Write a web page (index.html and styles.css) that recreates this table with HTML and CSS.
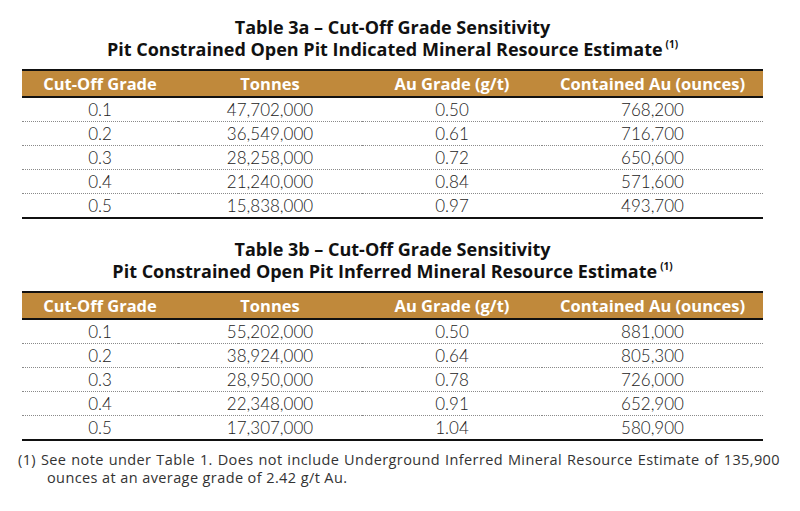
FILE: index.html
```html
<!DOCTYPE html>
<html>
<head>
<meta charset="utf-8">
<link rel="stylesheet" href="styles.css">
</head>
<body>
<div class="page">
  <section class="block">
    <h2 class="title">Table 3a – Cut-Off Grade Sensitivity<br>Pit Constrained Open Pit Indicated Mineral Resource Estimate<sup>(1)</sup></h2>
    <table class="data">
      <colgroup><col class="c1"><col class="c2"><col class="c3"><col class="c4"></colgroup>
      <thead><tr><th>Cut-Off Grade</th><th>Tonnes</th><th>Au Grade (g/t)</th><th>Contained Au (ounces)</th></tr></thead>
      <tbody>
        <tr><td>0.1</td><td>47,702,000</td><td>0.50</td><td>768,200</td></tr>
        <tr><td>0.2</td><td>36,549,000</td><td>0.61</td><td>716,700</td></tr>
        <tr><td>0.3</td><td>28,258,000</td><td>0.72</td><td>650,600</td></tr>
        <tr><td>0.4</td><td>21,240,000</td><td>0.84</td><td>571,600</td></tr>
        <tr><td>0.5</td><td>15,838,000</td><td>0.97</td><td>493,700</td></tr>
      </tbody>
    </table>
  </section>
  <section class="block second">
    <h2 class="title">Table 3b – Cut-Off Grade Sensitivity<br>Pit Constrained Open Pit Inferred Mineral Resource Estimate<sup>(1)</sup></h2>
    <table class="data">
      <colgroup><col class="c1"><col class="c2"><col class="c3"><col class="c4"></colgroup>
      <thead><tr><th>Cut-Off Grade</th><th>Tonnes</th><th>Au Grade (g/t)</th><th>Contained Au (ounces)</th></tr></thead>
      <tbody>
        <tr><td>0.1</td><td>55,202,000</td><td>0.50</td><td>881,000</td></tr>
        <tr><td>0.2</td><td>38,924,000</td><td>0.64</td><td>805,300</td></tr>
        <tr><td>0.3</td><td>28,950,000</td><td>0.78</td><td>726,000</td></tr>
        <tr><td>0.4</td><td>22,348,000</td><td>0.91</td><td>652,900</td></tr>
        <tr><td>0.5</td><td>17,307,000</td><td>1.04</td><td>580,900</td></tr>
      </tbody>
    </table>
  </section>
  <p class="note">(1) See note under Table 1. Does not include Underground Inferred Mineral Resource Estimate of 135,900 ounces at an average grade of 2.42 g/t Au.</p>
</div>
</body>
</html>
```

FILE: styles.css
```css
* { box-sizing: border-box; }
html, body { margin: 0; padding: 0; background: #fff; }
body { font-family: Lato, "Open Sans", sans-serif; color: #111; }
.page { width: 800px; padding-top: 16px; }
.block { width: 741px; margin-left: 22px; }
.block.second { margin-top: 19px; }
.title {
  margin: 0 0 9px 0;
  text-align: center;
  font-family: "Open Sans", Lato, sans-serif;
  font-size: 18px;
  line-height: 22px;
  font-weight: 700;
  color: #111;
}
.title sup {
  font-size: 10px;
  font-weight: 700;
  vertical-align: 8px;
  line-height: 0;
  margin-left: 3px;
}
.data { width: 741px; border-collapse: collapse; table-layout: fixed; }
.c1 { width: 156px; }
.c2 { width: 184px; }
.c3 { width: 180px; }
.c4 { width: 221px; }
.data th {
  background: #c0893b;
  color: #fff;
  font-family: "Open Sans", Lato, sans-serif;
  font-size: 16.5px;
  font-weight: 700;
  height: 27px;
  padding: 0;
  text-align: center;
  border-top: 2px solid #111;
  border-bottom: 2px solid #111;
}
.data td {
  font-size: 17px;
  font-weight: 300;
  color: #222;
  height: 24px;
  padding: 0;
  text-align: center;
  border-bottom: 1px dotted #8a8a8a;
}
.data tbody tr:last-child td { border-bottom: 2px solid #111; height: 25px; }
.note {
  margin: 10px 20px 0 18px;
  padding-left: 29px;
  text-indent: -29px;
  font-family: "Open Sans", Lato, sans-serif;
  font-size: 14.5px;
  letter-spacing: 0.4px;
  line-height: 18px;
  color: #333;
  text-align: justify;
}
```
